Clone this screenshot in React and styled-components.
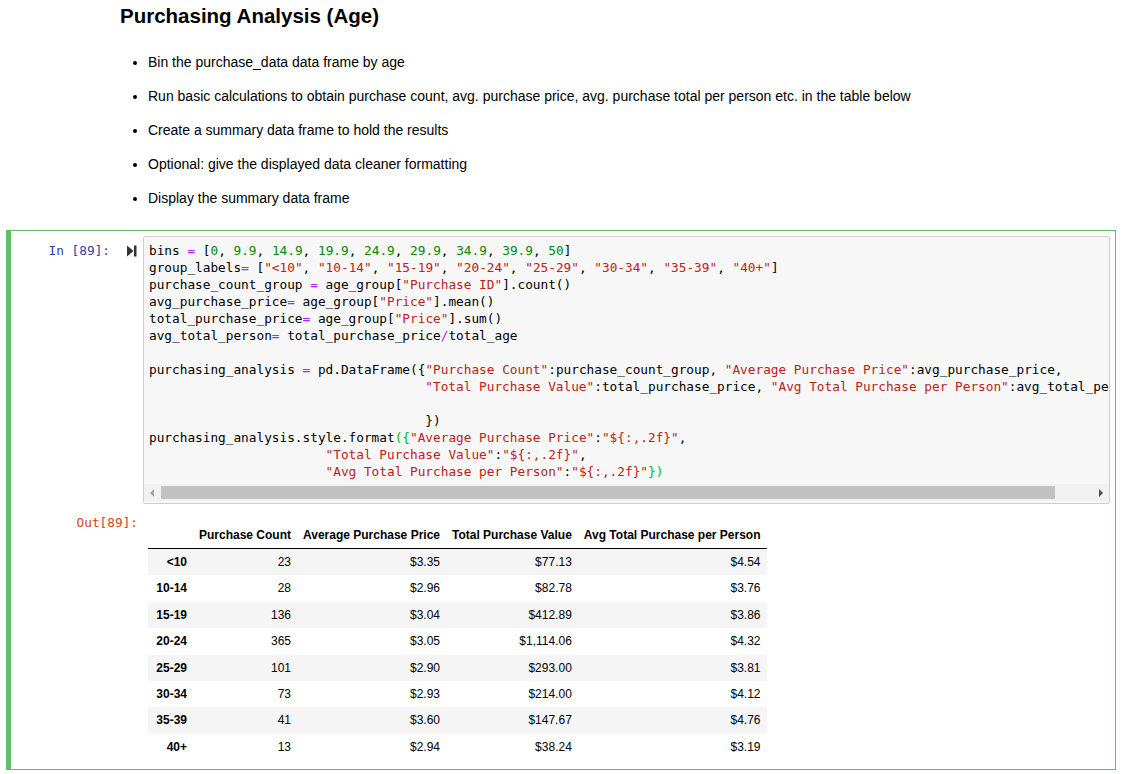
import React from 'react';
import styled, { createGlobalStyle } from 'styled-components';

const GlobalStyle = createGlobalStyle`
  body {
    margin: 0;
    background: #fff;
    color: #000;
    font-family: "Liberation Sans", Arial, sans-serif;
  }
`;

const bullets = [
    'Bin the purchase_data data frame by age',
    'Run basic calculations to obtain purchase count, avg. purchase price, avg. purchase total per person etc. in the table below',
    'Create a summary data frame to hold the results',
    'Optional: give the displayed data cleaner formatting',
    'Display the summary data frame',
];

// ⟦ ⟧ marks the bracket pair CodeMirror is highlighting
const codeLines = [
    'bins = [0, 9.9, 14.9, 19.9, 24.9, 29.9, 34.9, 39.9, 50]',
    'group_labels= ["<10", "10-14", "15-19", "20-24", "25-29", "30-34", "35-39", "40+"]',
    'purchase_count_group = age_group["Purchase ID"].count()',
    'avg_purchase_price= age_group["Price"].mean()',
    'total_purchase_price= age_group["Price"].sum()',
    'avg_total_person= total_purchase_price/total_age',
    '',
    'purchasing_analysis = pd.DataFrame({"Purchase Count":purchase_count_group, "Average Purchase Price":avg_purchase_price,',
    ' '.repeat(36) + '"Total Purchase Value":total_purchase_price, "Avg Total Purchase per Person":avg_total_person,',
    '',
    ' '.repeat(36) + '})',
    'purchasing_analysis.style.format⟦({⟧"Average Purchase Price":"${:,.2f}",',
    ' '.repeat(23) + '"Total Purchase Value":"${:,.2f}",',
    ' '.repeat(23) + '"Avg Total Purchase per Person":"${:,.2f}"⟦})⟧',
];

const TOKEN = /⟦([^⟧]*)⟧|("[^"]*")|(\d+(?:\.\d+)?)|([=/])|([^"⟦\d=/]+)/g;

function tokenize(line) {
    const out = [];
    TOKEN.lastIndex = 0;
    let m;
    while ((m = TOKEN.exec(line))) {
        if (m[1] !== undefined) out.push({ kind: 'match', text: m[1] });
        else if (m[2]) out.push({ kind: 'str', text: m[2] });
        else if (m[3]) out.push({ kind: 'num', text: m[3] });
        else if (m[4]) out.push({ kind: 'op', text: m[4] });
        else out.push({ kind: 'plain', text: m[5] });
    }
    return out;
}

const columns = ['Purchase Count', 'Average Purchase Price', 'Total Purchase Value', 'Avg Total Purchase per Person'];

const rows = [
    ['<10', '23', '$3.35', '$77.13', '$4.54'],
    ['10-14', '28', '$2.96', '$82.78', '$3.76'],
    ['15-19', '136', '$3.04', '$412.89', '$3.86'],
    ['20-24', '365', '$3.05', '$1,114.06', '$4.32'],
    ['25-29', '101', '$2.90', '$293.00', '$3.81'],
    ['30-34', '73', '$2.93', '$214.00', '$4.12'],
    ['35-39', '41', '$3.60', '$147.67', '$4.76'],
    ['40+', '13', '$2.94', '$38.24', '$3.19'],
];

function RunIcon() {
    return (
        <svg width="10" height="12" viewBox="0 0 10 12">
            <path d="M0 0.5 L6.5 6 L0 11.5 Z" fill="#333" />
            <rect x="7" y="0.5" width="2.5" height="11" fill="#333" />
        </svg>
    );
}

function App() {
    return (
        <>
            <GlobalStyle />
            <Markdown>
                <Title>Purchasing Analysis (Age)</Title>
                <BulletList>
                    {bullets.map((b) => (
                        <Bullet key={b}>{b}</Bullet>
                    ))}
                </BulletList>
            </Markdown>

            <Cell>
                <InputRow>
                    <Prompt $kind="in">In [89]:</Prompt>
                    <RunButton>
                        <RunIcon />
                    </RunButton>
                    <Editor>
                        <CodeScroll>
                            {codeLines.map((line, i) => (
                                <CodeLine key={i}>
                                    {line === '' ? '\u00a0' : tokenize(line).map((t, j) => (
                                        <Token key={j} $kind={t.kind}>{t.text}</Token>
                                    ))}
                                </CodeLine>
                            ))}
                        </CodeScroll>
                        <ScrollBar>
                            <ScrollArrow $dir="left" />
                            <ScrollTrack>
                                <ScrollThumb />
                            </ScrollTrack>
                            <ScrollArrow $dir="right" />
                        </ScrollBar>
                    </Editor>
                </InputRow>

                <OutputRow>
                    <Prompt $kind="out">Out[89]:</Prompt>
                    <OutputArea>
                        <DataTable>
                            <thead>
                                <tr>
                                    <HeadCell $index />
                                    {columns.map((c) => (
                                        <HeadCell key={c}>{c}</HeadCell>
                                    ))}
                                </tr>
                            </thead>
                            <tbody>
                                {rows.map((r) => (
                                    <BodyRow key={r[0]}>
                                        <IndexCell>{r[0]}</IndexCell>
                                        {r.slice(1).map((v, i) => (
                                            <ValueCell key={i}>{v}</ValueCell>
                                        ))}
                                    </BodyRow>
                                ))}
                            </tbody>
                        </DataTable>
                    </OutputArea>
                </OutputRow>
            </Cell>
        </>
    );
}

const Markdown = styled.div`
    padding: 4px 0 0 120px;
    height: 230px;
    box-sizing: border-box;
`;
const Title = styled.h2`
    margin: 0;
    font-size: 20.5px;
    line-height: 24px;
    font-weight: 700;
`;
const BulletList = styled.ul`
    margin: 24px 0 0;
    padding-left: 28px;
    list-style: disc;
`;
const Bullet = styled.li`
    font-size: 14px;
    line-height: 20px;
    margin-bottom: 14px;
`;

const Cell = styled.div`
    margin-left: 6px;
    width: 1110px;
    box-sizing: border-box;
    border: 1px solid #66bb6a;
    border-left: 5px solid #66bb6a;
    padding: 5px 5px 9px 0;
    display: flex;
    flex-direction: column;
`;
const InputRow = styled.div`
    display: flex;
    align-items: flex-start;
`;
const Prompt = styled.div`
    flex: none;
    width: ${(p) => (p.$kind === 'in' ? '99px' : '127px')};
    padding-right: ${(p) => (p.$kind === 'in' ? '0' : '5px')};
    padding-top: ${(p) => (p.$kind === 'in' ? '6px' : '9.5px')};
    text-align: right;
    font-family: "DejaVu Sans Mono", "Liberation Mono", monospace;
    font-size: 12.75px;
    line-height: 17px;
    color: ${(p) => (p.$kind === 'in' ? '#303f9f' : '#d84315')};
`;
const RunButton = styled.div`
    flex: none;
    width: 33px;
    height: 29px;
    display: flex;
    align-items: center;
    justify-content: flex-end;
    padding-right: 6px;
    box-sizing: border-box;
`;
const Editor = styled.div`
    flex: 1;
    min-width: 0;
    background: #f7f7f7;
    border: 1px solid #cfcfcf;
    border-radius: 2px;
    overflow: hidden;
`;
const CodeScroll = styled.div`
    padding: 5px 0 4px 5px;
    overflow: hidden;
    white-space: pre;
    font-family: "DejaVu Sans Mono", "Liberation Mono", monospace;
    font-size: 12.75px;
    line-height: 17px;
    color: #000;
`;
const CodeLine = styled.div`
    height: 17px;
`;
const tokenColors = {
    plain: '#000',
    str: '#ba2121',
    num: '#008800',
    op: '#aa22ff',
    match: '#00bb00',
};
const Token = styled.span`
    color: ${(p) => tokenColors[p.$kind]};
`;
const ScrollBar = styled.div`
    display: flex;
    height: 17px;
    margin-bottom: 2px;
    background: #f1f1f1;
`;
const ScrollArrow = styled.div`
    flex: none;
    width: 17px;
    position: relative;
    &::after {
        content: '';
        position: absolute;
        top: 5px;
        ${(p) => (p.$dir === 'left' ? 'left: 6px;' : 'left: 7px;')}
        border-top: 4px solid transparent;
        border-bottom: 4px solid transparent;
        ${(p) => (p.$dir === 'left'
            ? 'border-right: 4px solid #a3a3a3;'
            : 'border-left: 4px solid #505050;')}
    }
`;
const ScrollTrack = styled.div`
    flex: 1;
    padding: 2px 0;
`;
const ScrollThumb = styled.div`
    width: 96%;
    height: 100%;
    background: #c1c1c1;
`;

const OutputRow = styled.div`
    display: flex;
    align-items: flex-start;
`;
const OutputArea = styled.div`
    flex: 1;
    padding: 18px 0 0 5px;
`;
const DataTable = styled.table`
    border-collapse: collapse;
    border-spacing: 0;
    font-size: 12px;
    color: #000;
`;
const HeadCell = styled.th`
    text-align: right;
    font-weight: 700;
    padding: 6px;
    line-height: 14px;
    border-bottom: 1px solid #000;
    vertical-align: bottom;
    white-space: nowrap;
    width: ${(p) => (p.$index ? '33px' : 'auto')};
`;
const BodyRow = styled.tr`
    &:nth-child(odd) {
        background: #f5f5f5;
    }
`;
const IndexCell = styled.th`
    text-align: right;
    font-weight: 700;
    padding: 6px;
    line-height: 14.4px;
`;
const ValueCell = styled.td`
    text-align: right;
    padding: 6px;
    line-height: 14.4px;
`;

export default App;
